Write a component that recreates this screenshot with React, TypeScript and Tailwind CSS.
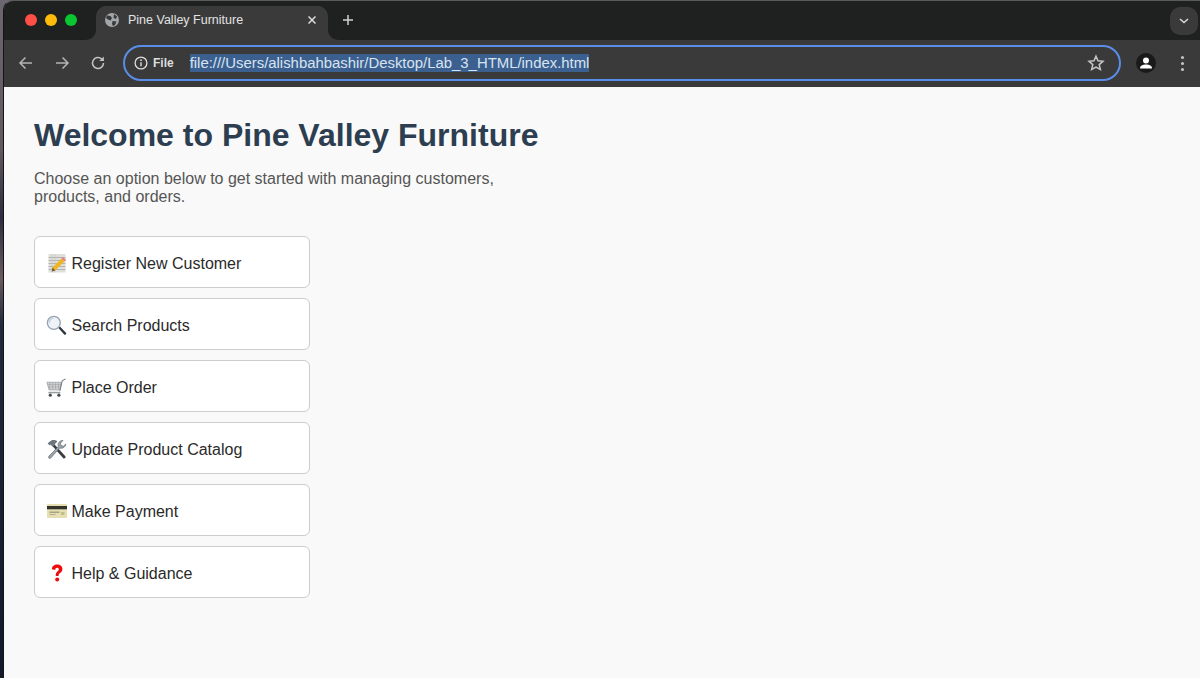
import React from "react";

const Note = () => (
  <svg width="20" height="20" viewBox="0 0 20 20" className="shrink-0">
    <rect x="1.5" y="1" width="17" height="18.500" fill="#dededa" />
    <path d="M1.500 4.500h17M1.500 7.500h17M1.500 10.500h17M1.500 13.500h17M1.500 16.500h17" stroke="#a9a9a6" strokeWidth="0.8" />
    <path d="M5 1v18.500M8 1v18.500" stroke="#c4c4c0" strokeWidth="0.6" />
    <path d="M5.500 14.500 14.500 5.500l3 2.800-9.200 9.200-3.500 1z" fill="#f0b622" />
    <path d="M14.500 5.500l1.500-1.500 3 2.800-1.500 1.500z" fill="#e77d86" />
    <path d="M4.800 18.500 5.500 14.500l2.800 3z" fill="#6d5a3e" />
  </svg>
);
const Magnifier = () => (
  <svg width="21" height="21" viewBox="0 0 22 22" className="shrink-0">
    <path d="M13 13.500l1.600-1.400 6.500 6.800c.6.800-.9 2.400-1.800 1.700z" fill="#2a333b" />
    <circle cx="8.200" cy="8.200" r="6.800" fill="#edf3f8" stroke="#97a3ae" strokeWidth="1.400" />
    <path d="M3.500 8a4.800 4.800 0 0 1 4.500-4.600" fill="none" stroke="#b3cbe0" strokeWidth="1.300" />
  </svg>
);
const Cart = () => (
  <svg width="21" height="21" viewBox="0 0 22 22" className="shrink-0">
    <path d="M1 5.500h15l-1.300 8H3.200z" fill="#d2d5d6" stroke="#989d9f" strokeWidth="0.8" />
    <path d="M4 6v7M7 6v7M10 6v7M13 6v7M2 8h14M2.500 10.500h13" stroke="#989d9f" strokeWidth="0.6" />
    <path d="M14.500 14.500 17 4l3.500-2" fill="none" stroke="#777c7e" strokeWidth="1.100" />
    <path d="M2.500 15.500h12.500v1.600H2.500z" fill="#989d9f" />
    <circle cx="4.500" cy="19" r="1.700" fill="#4a4e51" />
    <circle cx="13.500" cy="19" r="1.700" fill="#4a4e51" />
  </svg>
);
const Tools = () => (
  <svg width="21" height="21" viewBox="0 0 22 22" className="shrink-0">
    <path d="M7 7.500 9 5.700 20.300 18c.9 1.200-.9 3-2.200 2.100z" fill="#3a3c40" />
    <path d="M3 3.500 6 1.200c2.300-.4 4.600 0 6 1.300L10 4.400 8.900 6.500 7 8 5 6 3.800 6.600 1.700 4.800z" fill="#6d767c" />
    <path d="M20.800 5.200a5 5 0 0 1-6.600 4.300L5 20c-1.300 1.300-3.200-.6-2-2l9.800-9.900a5 5 0 0 1 5-6.600l-2.700 2.900.7 2.500 2.500.6z" fill="#9aa4ab" stroke="#5d666c" strokeWidth="0.700" />
  </svg>
);
const Card = () => (
  <svg width="20" height="14" viewBox="0 0 20 14" className="shrink-0">
    <rect x="0" y="0" width="20" height="14" rx="1" fill="#e6dfb2" />
    <rect x="0" y="2" width="20" height="3.300" fill="#33332a" />
    <rect x="2.500" y="7.500" width="10" height="1.500" fill="#a8a384" />
    <rect x="2.500" y="10" width="6" height="1" fill="#b3ae8e" />
    <rect x="14" y="8" width="3.500" height="3" fill="#c7bd84" />
  </svg>
);
const Question = () => (
  <svg width="20" height="20" viewBox="0 0 20 20" className="shrink-0">
    <path d="M4.800 6.300C5 3 7.400 1.500 10.200 1.500c3 0 5.200 1.800 5.200 4.400 0 2.100-1.100 3.100-2.500 4.200-1.100.9-1.300 1.500-1.300 3H8.800c-.1-2.300.3-3.300 1.600-4.500.9-.8 1.400-1.300 1.400-2.300 0-1-.7-1.600-1.700-1.600-1.100 0-1.800.8-1.900 2.200z" fill="#ee0b0b" />
    <circle cx="10.200" cy="16.500" r="2" fill="#ee0b0b" />
  </svg>
);

const items: { label: string; icon: React.ReactNode }[] = [
  { label: "Register New Customer", icon: <Note /> },
  { label: "Search Products", icon: <Magnifier /> },
  { label: "Place Order", icon: <Cart /> },
  { label: "Update Product Catalog", icon: <Tools /> },
  { label: "Make Payment", icon: <Card /> },
  { label: "Help & Guidance", icon: <Question /> },
];

export default function App() {
  return (
    <div className="flex h-[678px] w-[1200px] overflow-hidden bg-[linear-gradient(180deg,#6c6670_0%,#62585f_22%,#2c2d40_32%,#6a5a60_41%,#1f2a3c_48%,#1a2333_70%,#111a2a_100%)] font-['Liberation_Sans',Arial,sans-serif]">
      <div className="w-[3px] shrink-0" />
      <div className="flex min-w-0 flex-1 flex-col overflow-hidden rounded-tl-[10px] border-l border-t border-l-[#141414] border-t-[#5a5a5a]">
        <div className="flex h-[39px] shrink-0 items-end bg-[#1f2120] pl-[21px] pr-[2px]">
          <div className="mb-[14px] flex items-center gap-2">
            <span className="h-3 w-3 rounded-full bg-[#fe4f47]" />
            <span className="h-3 w-3 rounded-full bg-[#febb0b]" />
            <span className="h-3 w-3 rounded-full bg-[#0ac630]" />
          </div>
          <div className="relative ml-[19px] flex h-[34px] w-[232px] items-center rounded-t-[10px] bg-[#3a3a3a] pb-[6px] pl-[9px] pr-[12px]">
            <div className="absolute bottom-0 left-[-10px] h-[10px] w-[10px] bg-[#3a3a3a]">
              <div className="h-full w-full rounded-br-[10px] bg-[#1f2120]" />
            </div>
            <div className="absolute bottom-0 right-[-10px] h-[10px] w-[10px] bg-[#3a3a3a]">
              <div className="h-full w-full rounded-bl-[10px] bg-[#1f2120]" />
            </div>
            <svg width="14" height="14" viewBox="0 0 14 14" className="shrink-0">
              <circle cx="7" cy="7" r="7" fill="#a3a7ab" />
              <path d="M2 2.500 5.500 3 7 5 5.500 7.500 3 6.500 1 5zM9 1l3 2.500-1 2.500-2.500-1zM7.500 8l4 .5L10 12l-2 1-1-2z" fill="#3a3a3a" />
            </svg>
            <span className="ml-[9px] flex-1 text-[12.5px] text-[#e3e3e3]">Pine Valley Furniture</span>
            <svg width="8" height="8" viewBox="0 0 8 8" className="shrink-0">
              <path d="M.5.500l7 7M7.500.500l-7 7" stroke="#dcdcdc" strokeWidth="1.500" />
            </svg>
          </div>
          <svg width="12" height="12" viewBox="0 0 12 12" className="mb-[14px] ml-[14px] shrink-0">
            <path d="M6 1v10M1 6h10" stroke="#d0d0d0" strokeWidth="1.500" />
          </svg>
          <div className="mb-[5px] ml-auto flex h-7 w-7 items-center justify-center rounded-[10px] bg-[#3a3a3a]">
            <svg width="10" height="6" viewBox="0 0 10 6">
              <path d="M1 1l4 3.600L9 1" fill="none" stroke="#d8d8d8" strokeWidth="1.500" />
            </svg>
          </div>
        </div>

        <div className="flex h-[47px] shrink-0 items-center bg-[#3a3a3a] pb-[1px] pl-[14px] pr-[10px]">
          <svg width="16" height="16" viewBox="0 0 16 16" className="shrink-0">
            <path d="M14 8H2.500M7.500 2.500 2 8l5.500 5.500" fill="none" stroke="#b4b4b4" strokeWidth="1.500" />
          </svg>
          <svg width="16" height="16" viewBox="0 0 16 16" className="ml-5 shrink-0">
            <path d="M2 8h11.500M8.500 2.500 14 8l-5.500 5.500" fill="none" stroke="#b4b4b4" strokeWidth="1.500" />
          </svg>
          <svg width="16" height="16" viewBox="0 0 16 16" className="ml-[20px] shrink-0">
            <path d="M13.500 8a5.500 5.500 0 1 1-1.700-4L13.500 5.500" fill="none" stroke="#c4c4c4" strokeWidth="1.500" />
            <path d="M13.800 1.500v4.500H9.300z" fill="#c4c4c4" />
          </svg>
          <div className="ml-[17px] flex h-9 w-[998px] shrink-0 items-center rounded-full border-2 border-[#5a8de8] pl-[9px] pr-[14px]">
            <svg width="14" height="14" viewBox="0 0 14 14" className="shrink-0">
              <circle cx="7" cy="7" r="5.900" fill="none" stroke="#dedede" strokeWidth="1.300" />
              <path d="M7 6.200v4" stroke="#dedede" strokeWidth="1.400" />
              <circle cx="7" cy="4.200" r="0.900" fill="#dedede" />
            </svg>
            <span className="ml-[5px] text-xs font-bold text-[#dedede]">File</span>
            <span className="ml-[16px] bg-[#3b6090] text-[14.9px] leading-[18px] text-[#d8e3ef]">
              file:///Users/alishbahbashir/Desktop/Lab_3_HTML/index.html
            </span>
            <svg width="18" height="18" viewBox="0 0 18 18" className="ml-auto shrink-0">
              <path d="M9 2.200l2 4.600 5 .5-3.800 3.300 1.200 4.900L9 13l-4.400 2.500 1.200-4.900L2 7.300l5-.5z" fill="none" stroke="#c6c6c6" strokeWidth="1.500" />
            </svg>
          </div>
          <svg width="20" height="20" viewBox="0 0 20 20" className="ml-[15px] shrink-0">
            <circle cx="10" cy="10" r="10" fill="#1a1a1a" />
            <circle cx="10" cy="7.600" r="3" fill="#fff" />
            <path d="M4 15.500c0-3 2.700-4 6-4s6 1 6 4z" fill="#fff" />
          </svg>
          <div className="ml-[25px] flex flex-col gap-[3px]">
            <span className="h-[3px] w-[3px] rounded-full bg-[#c6c6c6]" />
            <span className="h-[3px] w-[3px] rounded-full bg-[#c6c6c6]" />
            <span className="h-[3px] w-[3px] rounded-full bg-[#c6c6c6]" />
          </div>
        </div>

        <main className="flex-1 bg-[#f9f9f9] pl-[30px] pt-[30px]">
          <h1 className="text-[32px] font-bold leading-[37px] text-[#2c3e50]">Welcome to Pine Valley Furniture</h1>
          <p className="mt-[16px] w-[500px] text-base leading-[18px] text-[#555555]">
            Choose an option below to get started with managing customers, products, and orders.
          </p>
          <div className="mt-[30px] flex w-[276px] flex-col gap-[10px]">
            {items.map((item) => (
              <button
                key={item.label}
                className="flex h-[52px] items-center rounded-md border border-[#cccccc] bg-white text-left text-base text-[#2a2a2a]"
              >
                <span className="relative top-[1px] flex w-[36.5px] shrink-0 items-center justify-center pl-[7px]">{item.icon}</span>
                <span className="relative top-[2px]">{item.label}</span>
              </button>
            ))}
          </div>
        </main>
      </div>
    </div>
  );
}
